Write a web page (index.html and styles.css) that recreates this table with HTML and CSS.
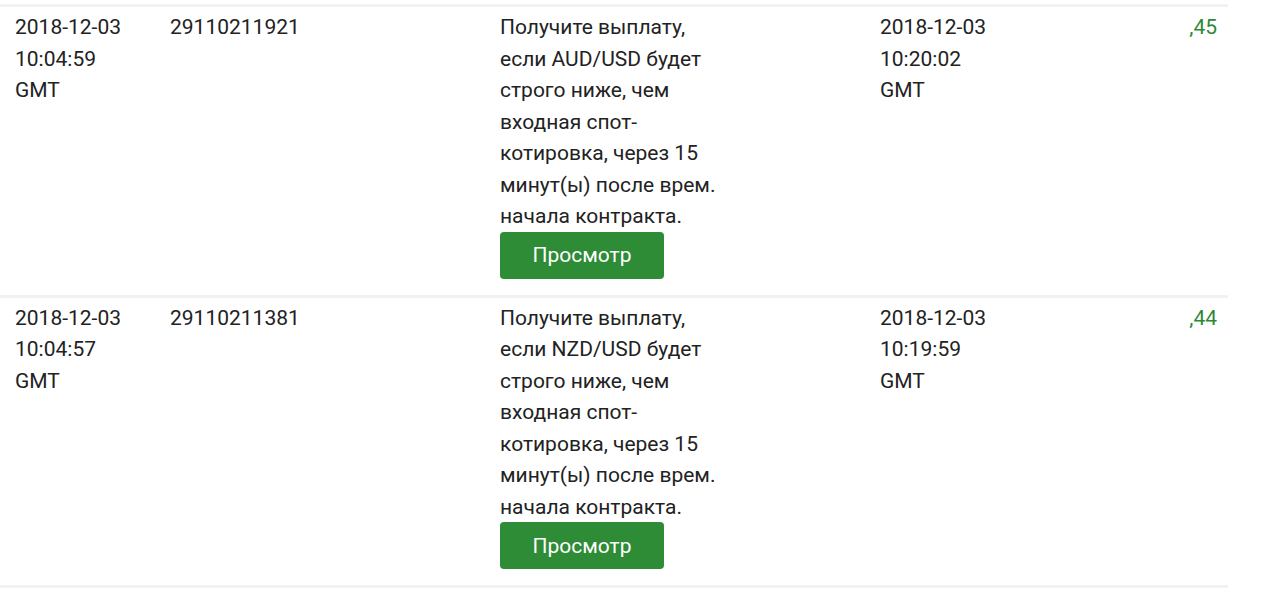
FILE: index.html
```html
<!DOCTYPE html>
<html lang="ru">

<head>
    <meta charset="UTF-8">
    <meta name="viewport" content="width=device-width, initial-scale=1.0">
    <title>Statement</title>
    <link rel="stylesheet" href="styles.css">
</head>

<body>
    <table class="statement">
        <colgroup>
            <col class="col-date">
            <col class="col-ref">
            <col class="col-desc">
            <col class="col-sell">
            <col class="col-amount">
        </colgroup>
        <tbody>
            <tr>
                <td>2018-12-03<br>10:04:59<br>GMT</td>
                <td>29110211921</td>
                <td>
                    <div class="desc">Получите выплату, если AUD/USD будет строго ниже, чем входная спот-котировка, через 15 минут(ы) после врем. начала контракта.</div>
                    <button class="view-btn">Просмотр</button>
                </td>
                <td>2018-12-03<br>10:20:02<br>GMT</td>
                <td class="amount">,45</td>
            </tr>
            <tr>
                <td>2018-12-03<br>10:04:57<br>GMT</td>
                <td>29110211381</td>
                <td>
                    <div class="desc">Получите выплату, если NZD/USD будет строго ниже, чем входная спот-котировка, через 15 минут(ы) после врем. начала контракта.</div>
                    <button class="view-btn">Просмотр</button>
                </td>
                <td>2018-12-03<br>10:19:59<br>GMT</td>
                <td class="amount">,44</td>
            </tr>
        </tbody>
    </table>
</body>

</html>
```

FILE: styles.css
```css
body {
    font-family: Roboto, "Liberation Sans", sans-serif;
    background-color: #fff;
    margin: 0;
    padding-top: 4px;
}

.statement {
    width: 1228px;
    border-collapse: collapse;
    table-layout: fixed;
    font-size: 21px;
    line-height: 31.5px;
    color: #222;
    border-bottom: 3px solid #f2f2f2;
}

.col-date {
    width: 155px;
}

.col-ref {
    width: 330px;
}

.col-desc {
    width: 380px;
}

.col-sell {
    width: 250px;
}

.statement tr {
    border-top: 3px solid #f2f2f2;
}

.statement td {
    vertical-align: top;
    padding: 5px 0 16px 15px;
}

.desc {
    width: 232px;
    margin-bottom: -1px;
}

.amount {
    text-align: right;
    color: #2e8836;
}

.statement td.amount {
    padding-right: 11px;
}

.view-btn {
    display: block;
    width: 164px;
    height: 47px;
    border: none;
    border-radius: 4px;
    background-color: #2e8b36;
    color: #fff;
    font-family: inherit;
    font-size: 21px;
    cursor: pointer;
}
```
